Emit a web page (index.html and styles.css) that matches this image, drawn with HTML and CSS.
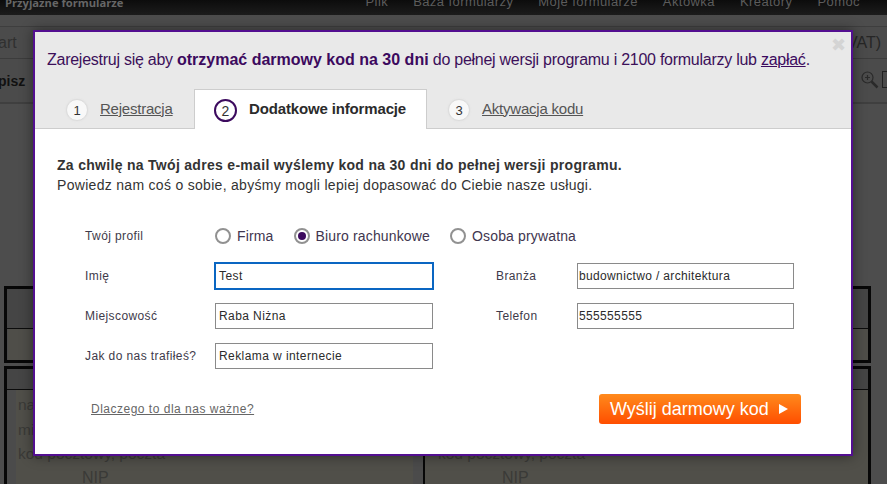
FILE: index.html
```html
<!DOCTYPE html>
<html lang="pl">
<head>
<meta charset="utf-8">
<title>Przyjazne formularze</title>
<link rel="stylesheet" href="styles.css">
</head>
<body>
<div class="page">
  <header class="topnav">
    <div class="brand">Przyjazne formularze</div>
    <nav class="menu"><span>Plik</span><span>Baza formularzy</span><span>Moje formularze</span><span>Aktówka</span><span>Kreatory</span><span>Pomoc</span></nav>
  </header>
  <div class="bar-a"><span class="bar-a-text">art</span><span class="bar-a-vat">(VAT)</span></div>
  <div class="bar-b">
    <span class="bar-b-text">pisz</span>
    <span class="bar-tools">
      <svg width="20" height="20" viewBox="0 0 20 20"><circle cx="7.5" cy="7.5" r="5.5" fill="none" stroke="#2a2a2a" stroke-width="1.2"/><path d="M5 7.5h5M7.5 5v5" stroke="#2a2a2a" stroke-width="1.2"/><path d="M11.5 11.5l6 6" stroke="#2a2a2a" stroke-width="2.5"/></svg>
      <span class="tool-box"></span>
    </span>
  </div>
  <div class="bar-c"></div>
  <main class="sheets">
    <div class="table-one">
      <div class="t1-head"></div>
      <div class="t1-row"></div>
    </div>
    <div class="table-two">
      <div class="t2-head"></div>
      <div class="t2-body">
        <div class="t2-col">
          <p class="clip-line">nazwa</p><p class="clip-line">miejscowość</p><p class="clip-line">kod pocztowy, poczta</p><p class="nip">NIP</p>
        </div>
        <div class="t2-col t2-right">
          <p class="clip-line">nazwa</p><p class="clip-line">miejscowość</p><p class="clip-line">kod pocztowy, poczta</p><p class="nip">NIP</p>
        </div>
      </div>
    </div>
  </main>
</div>

<section class="modal">
  <span class="close">✖</span>
  <div class="modal-top">
    <p class="lead">Zarejestruj się aby <strong>otrzymać darmowy kod na 30 dni</strong> do pełnej wersji programu i 2100 formularzy lub <a href="#">zapłać</a>.</p>
    <div class="tabs">
      <div class="tab tab-first"><span class="num">1</span><a href="#">Rejestracja</a></div>
      <div class="tab tab-active"><span class="num">2</span><b>Dodatkowe informacje</b></div>
      <div class="tab tab-last"><span class="num">3</span><a href="#">Aktywacja kodu</a></div>
    </div>
  </div>
  <div class="modal-body">
    <p class="intro"><strong>Za chwilę na Twój adres e-mail wyślemy kod na 30 dni do pełnej wersji programu.</strong><br>Powiedz nam coś o sobie, abyśmy mogli lepiej dopasować do Ciebie nasze usługi.</p>
    <form class="form">
      <div class="row row-profile">
        <label class="lbl">Twój profil</label>
        <div class="radios">
          <span class="radio"><i class="dot"></i>Firma</span>
          <span class="radio"><i class="dot on"></i>Biuro rachunkowe</span>
          <span class="radio"><i class="dot"></i>Osoba prywatna</span>
        </div>
      </div>
      <div class="row">
        <label class="lbl">Imię</label>
        <div class="field focus">Test</div>
        <label class="lbl lbl2">Branża</label>
        <div class="field f2">budownictwo / architektura</div>
      </div>
      <div class="row">
        <label class="lbl">Miejscowość</label>
        <div class="field">Raba Niżna</div>
        <label class="lbl lbl2">Telefon</label>
        <div class="field f2">555555555</div>
      </div>
      <div class="row">
        <label class="lbl">Jak do nas trafiłeś?</label>
        <div class="field">Reklama w internecie</div>
      </div>
      <div class="foot">
        <a href="#" class="why">Dlaczego to dla nas ważne?</a>
        <span class="send">Wyślij darmowy kod<i class="arrow"></i></span>
      </div>
    </form>
  </div>
</section>
</body>
</html>
```
FILE: styles.css
```css
* { box-sizing: border-box; }
html, body { margin: 0; padding: 0; height: 484px; overflow: hidden; }
body { background: #4d4d4d; font-family: "Liberation Sans", Arial, sans-serif; color: #2b2b2b; }
p { margin: 0; }
.page { height: 484px; overflow: hidden; display: flex; flex-direction: column; }

.topnav { height: 15px; background: linear-gradient(#0c0c0c, #1c1c1c); display: flex; justify-content: space-between; overflow: hidden; flex: none; }
.brand { font: bold 11.2px/6px "Open Sans", sans-serif; color: #666; margin-left: 5px; height: 15px; }
.menu { display: flex; gap: 25px; font-size: 13px; line-height: 4px; letter-spacing: .42px; color: #5c5c5c; margin-right: 27px; }

.bar-a { height: 33px; flex: none; margin-top: 11px; display: flex; justify-content: space-between; align-items: center; background: #4b4b4b; border-top: 1px solid #3e3e3e; border-bottom: 1px solid #3c3c3c; padding-right: 6px; }
.bar-a-text { font-size: 16px; color: #303030; margin-left: -2px; }
.bar-a-vat { font-size: 16px; color: #262626; }
.bar-b { height: 45px; flex: none; display: flex; justify-content: space-between; align-items: center; border-bottom: 2px solid #3f3f3f; background: #4b4b4b; }
.bar-b-text { font-weight: bold; font-size: 14px; color: #111; margin-left: -2px; }
.bar-tools { display: flex; align-items: center; gap: 2px; margin-right: -7px; margin-top: -2px; }
.tool-box { width: 12px; height: 17px; border: 1px solid #222; display: block; }
.bar-c { height: 182px; flex: none; }

.sheets { flex: none; margin: 0 16px 0 4px; }
.table-one { height: 77px; border: 3px solid #070707; display: flex; flex-direction: column; background: #4a4a4a; }
.t1-head { height: 40px; background: #454545; border-bottom: 1px solid #0c0c0c; flex: none; }
.t1-row { flex: 1; background: #4f4e49; margin-left: 1px; }
.table-two { margin-top: 3px; border: 3px solid #070707; border-bottom: 0; height: 130px; display: flex; flex-direction: column; }
.t2-head { height: 21px; background: #454545; border-bottom: 1px solid #0c0c0c; flex: none; }
.t2-body { flex: 1; display: grid; grid-template-columns: 416px 1fr; background: #4b4b4b; }
.t2-col { margin-left: 9px; margin-right: 10px; padding: 3px 0 0 2px; font-size: 15.5px; color: #3a3a37; overflow: hidden; background: #504f49; }
.t2-right { border-left: 2px solid #070707; margin-left: 0; margin-right: 0; padding-left: 13px; }
.clip-line { height: 24.5px; line-height: 24px; white-space: nowrap; }
.nip { margin-left: 64px; line-height: 22px; font-size: 16px; }

.modal { position: absolute; left: 33px; top: 30px; width: 820px; height: 426px; border: 2px solid #530f90; background: #fff; box-shadow: 0 0 12px rgba(0,0,0,.45); }
.close { position: absolute; right: 5px; top: 3px; font-size: 18px; line-height: 20px; color: #d4d4d4; font-family: "DejaVu Sans", sans-serif; }
.modal-top { height: 97px; background: #e9e9e9; border-bottom: 1px solid #cdcdcd; display: flex; flex-direction: column; }
.lead { margin: 18px 0 0 12px; font-size: 16px; line-height: 20px; color: #3c1059; letter-spacing: -0.26px; }
.lead strong { color: #3c0a5e; letter-spacing: 0; }
.lead a { color: #3c0a5e; }
.tabs { display: flex; height: 40px; margin-top: 19px; padding-left: 31px; }
.tab { display: flex; align-items: center; font-size: 15px; color: #555; }
.tab a { color: #555; letter-spacing: -0.22px; margin-left: 12px; margin-top: -2px; }
.tab-first { width: 128px; }
.tab-active { width: 233px; height: 40px; background: #fff; border: 1px solid #cdcdcd; border-bottom: 0; padding-left: 19px; }
.tab-active b { font-size: 15px; color: #2b2b2b; margin-left: 12px; margin-top: -3px; letter-spacing: -0.15px; }
.tab-last { padding-left: 21px; }
.num { width: 22px; height: 22px; border-radius: 50%; background: #f8f8f8; border: 1px solid #dcdcdc; box-shadow: 0 0 2px #ddd; font-size: 13px; color: #333; display: flex; align-items: center; justify-content: center; flex: none; margin-top: 2px; }
.tab-active .num { width: 23px; height: 23px; background: #fff; border: 2px solid #3c0a5e; box-shadow: none; font-size: 14px; }

.intro { margin: 26px 0 0 22px; font-size: 14px; line-height: 20px; color: #333; letter-spacing: .3px; }
.form { margin-top: 26px; padding-left: 50px; display: flex; flex-direction: column; }
.row { display: flex; align-items: center; height: 40px; }
.row-profile { height: 30px; margin-bottom: 5px; }
.lbl { width: 130px; font-size: 12px; color: #3e3a4a; flex: none; letter-spacing: .4px; }
.lbl2 { width: 81px; margin-left: 63px; }
.radios { display: flex; gap: 20px; font-size: 14px; color: #41364f; letter-spacing: .15px; }
.radio { display: flex; align-items: center; gap: 6px; }
.dot { width: 16px; height: 16px; border-radius: 50%; border: 2px solid #919191; background: #fff; display: block; position: relative; }
.dot.on::after { content: ""; position: absolute; left: 2px; top: 2px; width: 8px; height: 8px; border-radius: 50%; background: #3c0a5e; }
.field { width: 218px; height: 26px; border: 1px solid #8a8a8a; font-size: 12px; padding: 0 3px; line-height: 25px; letter-spacing: .42px; color: #2b2b2b; background: #fff; flex: none; }
.field.focus { border-color: #0a66c2; box-shadow: 0 0 0 1px #0a66c2; }
.f2 { width: 217px; padding: 0 1px; letter-spacing: .35px; }
.foot { display: flex; justify-content: space-between; align-items: center; width: 716px; margin-top: 18px; padding-left: 6px; }
.why { font-size: 12px; color: #666; letter-spacing: .5px; }
.send { width: 202px; height: 30px; border-radius: 3px; background: linear-gradient(#ff8a1c, #ff4e00); color: #fff; font-size: 18px; display: flex; align-items: center; padding-left: 11px; }
.arrow { display: block; margin-left: 10px; width: 0; height: 0; border-left: 9px solid #fff; border-top: 5px solid transparent; border-bottom: 5px solid transparent; }
```
